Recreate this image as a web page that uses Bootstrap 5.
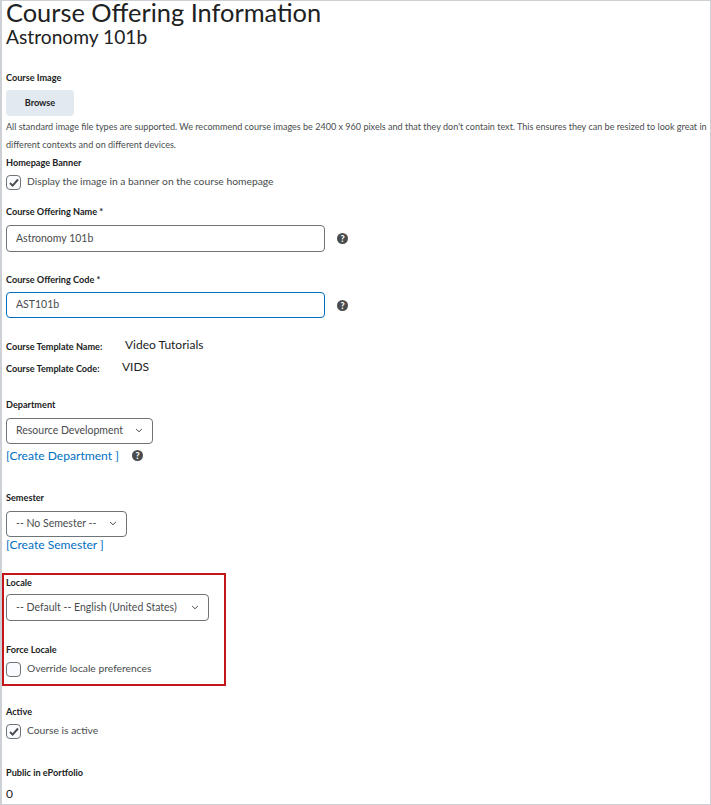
<!DOCTYPE html>
<html lang="en">
<head>
<meta charset="utf-8">
<title>Course Offering Information</title>
<link href="https://cdn.jsdelivr.net/npm/bootstrap@5.3.0/dist/css/bootstrap.min.css" rel="stylesheet">
<style>
html,body{margin:0;height:805px;overflow:hidden;background:#fff}
body{font-family:Lato,"Liberation Sans",sans-serif;color:#202122}
.pg{height:805px;border:1px solid #cdd1d5;border-left-width:2px;padding-left:4px;overflow:hidden;position:relative}
.ttl{font-size:25.4px;font-weight:400;line-height:22px;margin:0;color:#202122}
.sub{font-size:19.2px;font-weight:400;line-height:24px;margin:2px 0 0;color:#202122}
.lbl{display:block;font-size:9.15px;font-weight:700;line-height:12px;margin:0;color:#202122}
.btnb{width:68px;height:26px;padding:0;border:0;border-radius:4px;background:#e3e9f1;color:#202122;font-size:9.15px;font-weight:700;display:block}
.hint{font-size:9.05px;line-height:18px;color:#494c4e;margin:0;width:704px}
.chkrow{height:15px;gap:6px;margin-top:6px}
.chk{width:15px;height:15px;border:1px solid #6e7477;border-radius:4px;background:#f9fbff;flex:none;display:flex;align-items:center;justify-content:center}
.chktxt{font-size:10.3px;color:#494c4e;line-height:15px;padding-bottom:2px}
.fld{height:27px;width:319px;border:1px solid #6e7477;border-radius:4px;font-size:10.5px;color:#494c4e;padding:0 9px;display:flex;align-items:center;background:#fff}
.fld.foc{border-color:#006fbf;height:26px;padding:0 9px}
.sel{height:26px;border:1px solid #6e7477;border-radius:4px;font-size:10.5px;color:#494c4e;padding:0 9px;display:inline-flex;align-items:center;justify-content:space-between;background:#fff}
.help{flex:none;display:block}
.tpl{font-size:12px;color:#202122;line-height:15px}
.tplrow .lbl{padding-top:2px}
.tplrow .tpl{padding-bottom:2px}
.lnk{font-size:12.1px;line-height:15px;color:#006fbf;text-decoration:none}
.boxr{position:absolute;left:0;top:572px;width:224px;height:113px;border:2px solid #c5161c;pointer-events:none}
</style>
</head>
<body>
<div class="pg">
<h1 class="ttl">Course Offering Information</h1>
<h2 class="sub">Astronomy 101b</h2>

<label class="lbl" style="margin-top:23px">Course Image</label>
<button class="btnb" style="margin-top:6px" type="button">Browse</button>
<p class="hint" style="margin-top:2px">All standard image file types are supported. We recommend course images be 2400 x 960 pixels and that they don't contain text. This ensures they can be resized to look great in different contexts and on different devices.</p>

<label class="lbl" style="margin-top:3px">Homepage Banner</label>
<div class="d-flex align-items-center chkrow"><span class="chk"><svg width="10" height="9" viewBox="0 0 10 9"><path d="M1 5l2.6 2.6L9 1.5" fill="none" stroke="#494c4e" stroke-width="1.9"/></svg></span><span class="chktxt">Display the image in a banner on the course homepage</span></div>

<label class="lbl" style="margin-top:16px">Course Offering Name *</label>
<div class="d-flex align-items-center" style="margin-top:7px"><div class="fld">Astronomy 101b</div><svg class="help" style="margin-left:12px" width="11" height="11" viewBox="0 0 11 11"><circle cx="5.5" cy="5.5" r="5.5" fill="#494c4e"/><text x="5.5" y="8.7" text-anchor="middle" font-family="Lato" font-size="9" font-weight="900" fill="#fff">?</text></svg></div>

<label class="lbl" style="margin-top:22px">Course Offering Code *</label>
<div class="d-flex align-items-center" style="margin-top:6px"><div class="fld foc">AST101b</div><svg class="help" style="margin-left:12px" width="11" height="11" viewBox="0 0 11 11"><circle cx="5.5" cy="5.5" r="5.5" fill="#494c4e"/><text x="5.5" y="8.7" text-anchor="middle" font-family="Lato" font-size="9" font-weight="900" fill="#fff">?</text></svg></div>

<div class="d-flex align-items-center tplrow" style="margin-top:20px;height:15px"><label class="lbl" style="width:119px">Course Template Name:</label><span class="tpl">Video Tutorials</span></div>
<div class="d-flex align-items-center tplrow" style="margin-top:7px;height:15px"><label class="lbl" style="width:116px">Course Template Code:</label><span class="tpl">VIDS</span></div>

<label class="lbl" style="margin-top:24px">Department</label>
<div style="margin-top:5px;height:26px"><span class="sel" style="width:147px">Resource Development<svg width="8" height="5" viewBox="0 0 9 6"><path d="M1 1.2l3.5 3.3L8 1.2" fill="none" stroke="#494c4e" stroke-width="1.2"/></svg></span></div>
<div class="d-flex align-items-center" style="margin-top:6px"><a class="lnk" href="#">[Create Department ]</a><svg class="help" style="margin-left:13px" width="11" height="11" viewBox="0 0 11 11"><circle cx="5.5" cy="5.5" r="5.5" fill="#494c4e"/><text x="5.5" y="8.7" text-anchor="middle" font-family="Lato" font-size="9" font-weight="900" fill="#fff">?</text></svg></div>

<label class="lbl" style="margin-top:29px">Semester</label>
<div style="margin-top:5px;height:26px"><span class="sel" style="width:121px">-- No Semester --<svg width="8" height="5" viewBox="0 0 9 6"><path d="M1 1.2l3.5 3.3L8 1.2" fill="none" stroke="#494c4e" stroke-width="1.2"/></svg></span></div>
<div style="margin-top:-4px;height:15px"><a class="lnk" href="#">[Create Semester ]</a></div>

<label class="lbl" style="margin-top:31px">Locale</label>
<div style="margin-top:4px;height:27px"><span class="sel" style="width:203px;height:27px">-- Default -- English (United States)<svg width="8" height="5" viewBox="0 0 9 6"><path d="M1 1.2l3.5 3.3L8 1.2" fill="none" stroke="#494c4e" stroke-width="1.2"/></svg></span></div>

<label class="lbl" style="margin-top:24px">Force Locale</label>
<div class="d-flex align-items-center chkrow"><span class="chk"></span><span class="chktxt">Override locale preferences</span></div>

<label class="lbl" style="margin-top:29px">Active</label>
<div class="d-flex align-items-center chkrow"><span class="chk"><svg width="10" height="9" viewBox="0 0 10 9"><path d="M1 5l2.6 2.6L9 1.5" fill="none" stroke="#494c4e" stroke-width="1.9"/></svg></span><span class="chktxt">Course is active</span></div>

<label class="lbl" style="margin-top:28px">Public in ePortfolio</label>
<div class="tpl" style="margin-top:7px">0</div>
<div class="boxr"></div>
</div>
<script src="https://cdn.jsdelivr.net/npm/bootstrap@5.3.0/dist/js/bootstrap.bundle.min.js"></script>
</body>
</html>
